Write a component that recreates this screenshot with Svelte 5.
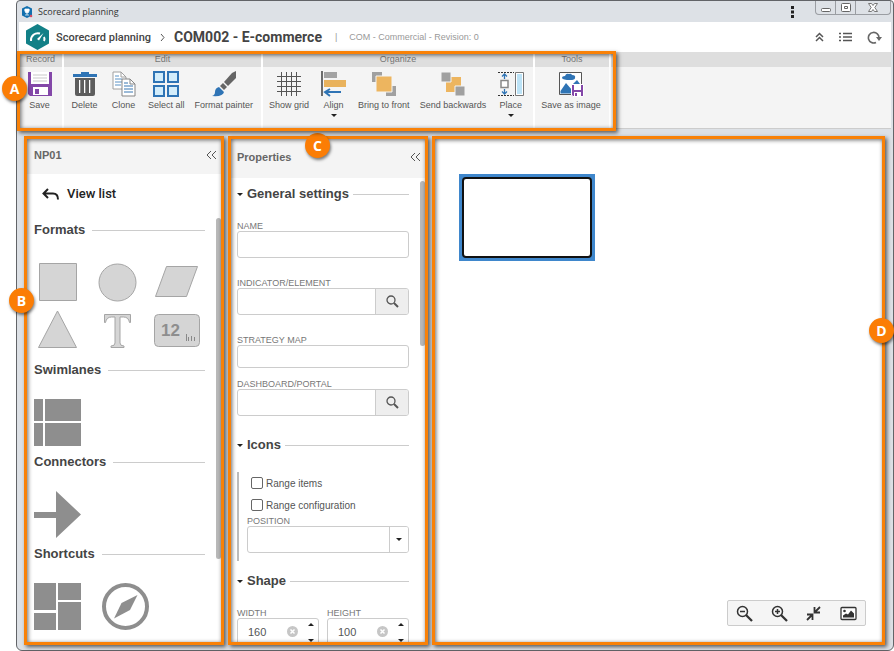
<script lang="ts">
  interface Action {
    id: string;
    label: string;
    menu?: boolean;
  }

  interface Group {
    title: string;
    actions: Action[];
  }

  const groups: Group[] = [
    { title: 'Record', actions: [{ id: 'save', label: 'Save' }] },
    {
      title: 'Edit',
      actions: [
        { id: 'delete', label: 'Delete' },
        { id: 'clone', label: 'Clone' },
        { id: 'select', label: 'Select all' },
        { id: 'painter', label: 'Format painter' },
      ],
    },
    {
      title: 'Organize',
      actions: [
        { id: 'grid', label: 'Show grid' },
        { id: 'align', label: 'Align', menu: true },
        { id: 'front', label: 'Bring to front' },
        { id: 'back', label: 'Send backwards' },
        { id: 'place', label: 'Place', menu: true },
      ],
    },
    { title: 'Tools', actions: [{ id: 'image', label: 'Save as image' }] },
  ];

  const palette = [
    { title: 'Formats', wide: false, items: ['square', 'circle', 'parallelogram', 'triangle', 'text', 'indicator'] },
    { title: 'Swimlanes', wide: true, items: ['swimlane'] },
    { title: 'Connectors', wide: true, items: ['arrow'] },
    { title: 'Shortcuts', wide: true, items: ['portal', 'compass'] },
  ];

  let name = $state('');
  let indicator = $state('');
  let strategyMap = $state('');
  let dashboard = $state('');
  let rangeItems = $state(false);
  let rangeConfig = $state(false);
  let position = $state('');
  let size = $state<Record<string, number | null>>({ width: 160, height: 100 });

  function step(key: string, delta: number) {
    size[key] = (size[key] ?? 0) + delta;
  }
</script>

{#snippet actionIcon(id: string)}
  <svg class="action-icon" width="26" height="26" viewBox="0 0 26 26" aria-hidden="true">
    {#if id === 'save'}
      <path d="M1 1h24v24H3l-2-2z" fill="#8347a8" />
      <path d="M4 1h18v12H4z" fill="#fff" />
      <path d="M6 4h14M6 7h14M6 10h14" stroke="#c9c9c9" />
      <path d="M6 16h15v8H6z" fill="#fff" />
      <path d="M8 18h4v5H8z" fill="#8347a8" />
    {:else if id === 'delete'}
      <path d="M9 1h8v2h8v3H1V3h8z" fill="#2f74b5" />
      <path d="M3 7h20v16q0 2-2 2H5q-2 0-2-2z" fill="#5d5d5d" />
      <path d="M8 9v13M13 9v13M18 9v13" stroke="#fff" stroke-width="2" />
      <path d="M8.500 9v13M13.500 9v13M18.500 9v13" stroke="#8b8b8b" />
    {:else if id === 'clone'}
      <path d="M2 1h8l5 5v12H2z" fill="#fff" stroke="#a0a0a0" />
      <path d="M10 1v5h5" fill="none" stroke="#a0a0a0" />
      <path d="M4 5h4M4 8h7M4 11h7M4 14h6" stroke="#5a92c5" />
      <path d="M11 8h8l5 5v12H11z" fill="#fff" stroke="#858585" />
      <path d="M19 8v5h5" fill="none" stroke="#858585" />
      <path d="M13 12h4M13 15h9M13 18h9M13 21h9" stroke="#3977b1" />
    {:else if id === 'select'}
      <g fill="#d3edfb" stroke="#2f74b5" stroke-width="2">
        <path d="M1 1h10v10H1zM15 1h10v10H15zM1 15h10v10H1zM15 15h10v10H15z" />
      </g>
    {:else if id === 'painter'}
      <path d="M25 0v7l-8 8-4-4 8-9z" fill="#656565" />
      <path d="M12 12l4 4-3 3-4-4z" fill="#656565" />
      <path d="M8 16l5 5q-1 5-12 4 3-1 3-4 0-4 4-5z" fill="#2f74b5" />
    {:else if id === 'grid'}
      <path
        d="M5.500 1v24M10.500 1v24M15.500 1v24M20.500 1v24M1 5.500h24M1 10.500h24M1 15.500h24M1 20.500h24"
        fill="none"
        stroke="#555"
      />
    {:else if id === 'align'}
      <path d="M1 0v25" stroke="#222" stroke-width="1.300" />
      <path d="M3 1h13v6H3z" fill="#a3a3a3" />
      <path d="M3 9h22v7H3z" fill="#e9b25c" />
      <path d="M20 21H4m5-3-5 3 5 4" fill="none" stroke="#2f74b5" stroke-width="2" />
    {:else if id === 'front'}
      <path d="M1 1h10v10H1zM15 15h10v10H15z" fill="#a0a0a0" />
      <path d="M5 5h16v16H5z" fill="#edb55f" stroke="#f4f4f4" />
    {:else if id === 'back'}
      <path d="M6 6h15v15H6z" fill="#edb55f" />
      <path d="M1 1h10v10H1zM15 15h10v10H15z" fill="#a0a0a0" stroke="#f4f4f4" />
    {:else if id === 'place'}
      <path d="M0 1.500h16M0 24.500h16" stroke="#333" stroke-dasharray="2 1" />
      <path d="M17.500 1.500h8v23h-8z" fill="#fff" stroke="#777" />
      <path d="M19 3h5v20h-5z" fill="#bce3f7" />
      <path d="M3 9.500h7v7H3z" fill="#fff" stroke="#888" stroke-width="1.500" />
      <path d="M6.500 8V3M4 5.500L6.500 3 9 5.500M6.500 18v5M4 20.500L6.500 23 9 20.500" fill="none" stroke="#2f74b5" stroke-width="1.300" />
    {:else}
      <path d="M1.500 1.500h22v22h-22z" fill="#fff" stroke="#555" />
      <path d="M4 7q0-2 3-2 1-3 4-2 2-1 3 1 4 0 3 3 0 2-5 2-7 0-8-2z" fill="#2f74b5" />
      <path d="M2.500 22.500V20L8 12l6 7v3.500zM15 13l4-4 3 4z" fill="#2f74b5" />
      <path d="M13.500 13.500h12v12H15l-1.500-1.500z" fill="#8347a8" stroke="#fff" />
      <path d="M16 14h7v5h-7zM16 21h7v4h-7z" fill="#fff" />
      <path d="M17 22h2v3h-2z" fill="#8347a8" />
    {/if}
  </svg>
{/snippet}

{#snippet shape(id: string)}
  <svg width="47" height="47" viewBox="0 0 47 47" aria-hidden="true">
    <g fill="#d5d5d5" stroke="#a5a5a5">
      {#if id === 'square'}
        <path d="M5.500 4.500h37v37h-37z" />
      {:else if id === 'circle'}
        <circle cx="23.500" cy="23.500" r="18.500" />
      {:else if id === 'parallelogram'}
        <path d="M12.500 7.500h31l-11 30h-31z" />
      {:else if id === 'triangle'}
        <path d="M23.500 4l19 36.500h-38z" />
      {:else if id === 'text'}
        <path
          d="M10.500 7.500h26v8h-1q-1-5.500-6-5.500h-3.500v26q0 3 4 3v1.500h-13v-1.500q4 0 4-3v-26H17.500q-5 0-6 5.500h-1z"
        />
      {:else if id === 'indicator'}
        <rect x="0.500" y="7.500" width="45" height="32" rx="4" />
        <path d="M32.500 27v7M34.500 30v4M37.500 29v5M40.500 30v4" stroke="#888" />
        <text x="7" y="29">12</text>
      {/if}
    </g>
    <g fill="#8e8e8e">
      {#if id === 'swimlane'}
        <path d="M0 0h9v22H0zM11 0h36v22H11zM0 24h9v23H0zM11 24h36v23H11z" />
      {:else if id === 'arrow'}
        <path d="M0 21h22V0l25 23.500L22 47V27H0z" />
      {:else if id === 'portal'}
        <path d="M0 0h22v27H0zM24 0h23v17H24zM0 30h22v17H0zM24 19h23v28H24z" />
      {:else if id === 'compass'}
        <circle cx="23.500" cy="23.500" r="21.500" fill="none" stroke="#8e8e8e" stroke-width="4" />
        <path d="M35.500 12L28 27l-16 8.500L19.500 20z" />
      {/if}
    </g>
  </svg>
{/snippet}

{#snippet collapseIcon()}
  <svg width="11" height="10" viewBox="0 0 11 10" fill="none" stroke="#555" aria-hidden="true">
    <path d="M5 1L1 5l4 4M10 1L6 5l4 4" />
  </svg>
{/snippet}

{#snippet searchIcon()}
  <svg width="13" height="13" viewBox="0 0 13 13" fill="none" stroke="#555" aria-hidden="true">
    <circle cx="5" cy="5" r="4" stroke-width="1.300" />
    <path d="M8 8l4 4" stroke-width="2" />
  </svg>
{/snippet}

{#snippet callout(letter: string)}
  <div class="callout">
    <span class="badge badge-{letter.toLowerCase()}">{letter}</span>
  </div>
{/snippet}

{#snippet sizeField(key: string)}
  <div class="field">
    <label for={key}>{key}</label>
    <div class="control">
      <input id={key} type="number" bind:value={size[key]} />
      <button class="clear" aria-label="Clear {key}" onclick={() => (size[key] = null)}>
        <svg width="11" height="11" viewBox="0 0 11 11">
          <circle cx="5.500" cy="5.500" r="5.500" fill="#c6c6c6" />
          <path d="M3.500 3.500l4 4m0-4l-4 4" stroke="#fff" stroke-width="1.500" />
        </svg>
      </button>
      <span class="stepper">
        <button aria-label="Increase {key}" onclick={() => step(key, 1)}><i class="caret up"></i></button>
        <button aria-label="Decrease {key}" onclick={() => step(key, -1)}><i class="caret"></i></button>
      </span>
    </div>
  </div>
{/snippet}

<div class="window">
  <div class="titlebar">
    <svg width="12" height="12" viewBox="0 0 12 12" aria-hidden="true">
      <path d="M6 0l5 2.500v7L6 12 1 9.500v-7z" fill="#126fae" />
      <path d="M4 3h4v2q0 2-2 2T4 5zM3 4h6M6 7v2M4 9h4" fill="#fff" stroke="#fff" stroke-width=".7" />
      <circle cx="10" cy="10" r="1.300" fill="#d44c65" />
    </svg>
    <span>Scorecard planning</span>
    <button class="more" aria-label="More options">
      <svg width="3" height="12" viewBox="0 0 3 12" fill="#222">
        <path d="M0 0h3v3H0zM0 4.500h3v3H0zM0 9h3v3H0z" />
      </svg>
    </button>
    <div class="window-controls">
      <button class="minimize" aria-label="Minimize">
        <svg width="10" height="4" viewBox="0 0 10 4">
          <rect x=".5" y=".5" width="9" height="3" rx="1" fill="#fff" stroke="#666" />
        </svg>
      </button>
      <button aria-label="Maximize">
        <svg width="10" height="9" viewBox="0 0 10 9">
          <rect x=".5" y=".5" width="9" height="8" rx="1" fill="#fff" stroke="#666" />
          <path d="M3.500 3.500h3v2h-3z" fill="none" stroke="#666" />
        </svg>
      </button>
      <button class="close" aria-label="Close">
        <svg width="10" height="9" viewBox="0 0 10 9">
          <path d="M.5.500h3L5 2.500 6.500.500h3l-2.700 4 2.700 4h-3L5 6.500 3.500 8.500h-3l2.700-4z" fill="#fff" stroke="#777" />
        </svg>
      </button>
    </div>
  </div>

  <header>
    <svg width="25" height="28" viewBox="0 0 25 28" aria-hidden="true">
      <path d="M12.500 1L24 7.500v13L12.500 27 1 20.500v-13z" fill="#128087" />
      <path d="M6 18a7 7 0 0 1 9-7.500M19 14q1 2 0 4" fill="none" stroke="#fff" stroke-width="2" />
      <path d="M18.500 10L14 17.500l-2-1.500z" fill="#fff" />
    </svg>
    <a href="#planning">Scorecard planning</a>
    <svg width="5" height="9" viewBox="0 0 5 9" fill="none" stroke="#555" aria-hidden="true">
      <path d="M1 1l3 3.500L1 8" />
    </svg>
    <h1>COM002 - E-commerce</h1>
    <span class="revision"><span>|</span><span>COM - Commercial - Revision: 0</span></span>
    <div class="header-tools">
      <button aria-label="Collapse toolbar">
        <svg width="9" height="10" viewBox="0 0 9 10" fill="none" stroke="#555" stroke-width="1.500">
          <path d="M1 5l3.500-3.500L8 5M1 9l3.500-3.500L8 9" />
        </svg>
      </button>
      <button aria-label="List">
        <svg width="13" height="10" viewBox="0 0 13 10" stroke="#555" stroke-width="1.500">
          <path d="M0 1.500h2M4 1.500h9M0 5h2M4 5h9M0 8.500h2M4 8.500h9" />
        </svg>
      </button>
      <button aria-label="Refresh">
        <svg width="15" height="13" viewBox="0 0 15 13">
          <path d="M9 11.500A5.300 5.300 0 1 1 12 7" fill="none" stroke="#666" stroke-width="1.600" />
          <path d="M9 6h6l-3 4z" fill="#666" />
        </svg>
      </button>
    </div>
  </header>

  <div class="ribbon">
    <div class="groups">
      {#each groups as group}
        <section class="group">
          <h2>{group.title}</h2>
          <div class="actions">
            {#each group.actions as action (action.id)}
              <button>
                {@render actionIcon(action.id)}
                <span>{action.label}</span>
                {#if action.menu}<i class="caret"></i>{/if}
              </button>
            {/each}
          </div>
        </section>
      {/each}
      {@render callout('A')}
    </div>
    <div class="ribbon-rest"></div>
  </div>

  <main>
    <aside class="panel shapes">
      <div class="panel-head">
        <h2>NP01</h2>
        <button aria-label="Collapse NP01">{@render collapseIcon()}</button>
      </div>
      <div class="panel-body">
        <button class="view-list">
          <svg width="17" height="13" viewBox="0 0 17 13" fill="none" stroke="#222" stroke-width="2">
            <path d="M6 1L1.500 5.500 6 10M2 5.500h9q5 0 5 6" />
          </svg>
          View list
        </button>
        {#each palette as section}
          <section>
            <h3>{section.title}</h3>
            <div class="shape-grid" class:wide={section.wide}>
              {#each section.items as item}
                <button aria-label={item}>{@render shape(item)}</button>
              {/each}
            </div>
          </section>
        {/each}
      </div>
      <div class="thumb"></div>
      {@render callout('B')}
    </aside>

    <aside class="panel properties">
      <div class="panel-head">
        <h2>Properties</h2>
        <button aria-label="Collapse properties">{@render collapseIcon()}</button>
      </div>
      <div class="panel-body">
        <h3><i class="caret"></i>General settings</h3>
        <div class="fields">
          <div class="field">
            <label for="name">Name</label>
            <div class="control"><input id="name" type="text" bind:value={name} /></div>
          </div>
          <div class="field">
            <label for="indicator">Indicator/Element</label>
            <div class="control">
              <input id="indicator" type="text" bind:value={indicator} />
              <button class="search" aria-label="Search indicator">{@render searchIcon()}</button>
            </div>
          </div>
          <div class="field">
            <label for="strategy">Strategy map</label>
            <div class="control short"><input id="strategy" type="text" bind:value={strategyMap} /></div>
          </div>
          <div class="field near">
            <label for="dashboard">Dashboard/Portal</label>
            <div class="control">
              <input id="dashboard" type="text" bind:value={dashboard} />
              <button class="search" aria-label="Search dashboard">{@render searchIcon()}</button>
            </div>
          </div>
        </div>

        <h3><i class="caret"></i>Icons</h3>
        <div class="icon-settings">
          <label class="check"><input type="checkbox" bind:checked={rangeItems} />Range items</label>
          <label class="check"><input type="checkbox" bind:checked={rangeConfig} />Range configuration</label>
          <div class="field">
            <label for="position">Position</label>
            <div class="control">
              <select id="position" bind:value={position}><option value=""></option></select>
              <span class="drop"><i class="caret"></i></span>
            </div>
          </div>
        </div>

        <h3><i class="caret"></i>Shape</h3>
        <div class="size-row">
          {@render sizeField('width')}
          {@render sizeField('height')}
        </div>
      </div>
      <div class="thumb"></div>
      {@render callout('C')}
    </aside>

    <section class="panel canvas">
      <div class="node"></div>
      <div class="zoom-tools">
        <button aria-label="Zoom out">
          <svg width="17" height="17" viewBox="0 0 17 17" fill="none" stroke="#333">
            <circle cx="6.500" cy="6.500" r="5" stroke-width="1.500" />
            <path d="M4 6.500h5" stroke-width="1.500" />
            <path d="M10 10l6 6" stroke-width="2.300" />
          </svg>
        </button>
        <button aria-label="Zoom in">
          <svg width="17" height="17" viewBox="0 0 17 17" fill="none" stroke="#333">
            <circle cx="6.500" cy="6.500" r="5" stroke-width="1.500" />
            <path d="M4 6.500h5M6.500 4v5" stroke-width="1.500" />
            <path d="M10 10l6 6" stroke-width="2.300" />
          </svg>
        </button>
        <button aria-label="Fit">
          <svg width="17" height="17" viewBox="0 0 17 17" fill="none" stroke="#333" stroke-width="1.800">
            <path d="M15 2l-5 5M9.500 2v5.500H15M2 15l5-5M2 9.500h5.500V15" />
          </svg>
        </button>
        <button aria-label="Background image">
          <svg width="17" height="17" viewBox="0 0 17 17">
            <rect x="1" y="2.500" width="15" height="12" rx="1" fill="#fff" stroke="#333" stroke-width="1.300" />
            <circle cx="4.500" cy="6" r="1.300" fill="#333" />
            <path d="M3 12.500v-2l3-2 2 1 3-4 3 3v4z" fill="#333" />
          </svg>
        </button>
      </div>
      {@render callout('D')}
    </section>
  </main>
</div>

<style>
  :global(body) {
    margin: 0;
    background: #fff;
  }

  .window {
    box-sizing: border-box;
    display: flex;
    flex-direction: column;
    height: 100vh;
    margin-left: 16px;
    padding: 0 2px 3px;
    border: 1px solid #626468;
    border-radius: 4px 4px 6px 6px;
    background: #dde1e6;
    font-family: 'Liberation Sans', Arial, sans-serif;
    font-size: 9px;
    color: #555;
  }

  button {
    margin: 0;
    padding: 0;
    border: 0;
    background: none;
    font: inherit;
    color: inherit;
    cursor: pointer;
  }

  svg {
    display: block;
    flex-shrink: 0;
  }

  h1,
  h2,
  h3 {
    margin: 0;
  }

  .caret {
    width: 0;
    height: 0;
    border: 3px solid transparent;
    border-top-color: #222;
    border-bottom-width: 0;
  }

  .caret.up {
    border-top-width: 0;
    border-bottom: 3px solid #222;
  }

  .titlebar {
    display: flex;
    align-items: center;
    height: 21px;
    padding-left: 2px;
    gap: 5px;
    font-family: 'Open Sans', sans-serif;
    color: #333;
  }

  .more {
    margin-left: auto;
    margin-right: 16px;
  }

  .window-controls {
    display: flex;
    align-self: flex-start;
    height: 13px;
    border: 1px solid #9a9da2;
    border-top: 0;
    border-radius: 0 0 4px 4px;
  }

  .window-controls button {
    display: flex;
    align-items: center;
    justify-content: center;
    width: 20px;
    border-right: 1px solid #9a9da2;
    box-sizing: border-box;
  }

  .window-controls .minimize {
    align-items: flex-end;
    padding-bottom: 2px;
  }

  .window-controls .close {
    width: 34px;
    border-right: 0;
  }

  header {
    display: flex;
    align-items: center;
    height: 30px;
    padding: 0 9px 0 6px;
    background: #fff;
  }

  header a {
    margin: 0 9px 0 6px;
    font-family: Roboto, sans-serif;
    font-size: 11px;
    font-weight: 500;
    color: #444;
    text-decoration: none;
  }

  h1 {
    margin-left: 9px;
    font-family: Roboto, sans-serif;
    font-size: 14px;
    color: #444;
  }

  .revision {
    display: flex;
    gap: 12px;
    margin-left: 13px;
    color: #999;
  }

  .header-tools {
    display: flex;
    gap: 15px;
    align-items: center;
    margin-left: auto;
  }

  .ribbon {
    display: flex;
    flex-shrink: 0;
    height: 76px;
    border-bottom: 1px solid #ccc;
    background: #fff;
  }

  .groups {
    position: relative;
    z-index: 2;
    display: flex;
    gap: 2px;
  }

  .group {
    display: flex;
    flex-direction: column;
    background: #f4f4f4;
  }

  .group h2 {
    background: #dedede;
    font-size: 9px;
    font-weight: 400;
    line-height: 15px;
    text-align: center;
    color: #777;
  }

  .actions {
    display: flex;
    padding: 0 3px 0 1px;
  }

  .actions button {
    display: flex;
    flex-direction: column;
    align-items: center;
    min-width: 39px;
    padding: 4px 5px 0;
  }

  .actions span {
    margin-top: 2px;
    line-height: 12px;
    white-space: nowrap;
  }

  .actions .caret {
    margin-top: 3px;
  }

  .ribbon-rest {
    flex: 1;
    margin-left: 2px;
    border-top: 15px solid #dedede;
    background: #f4f4f4;
  }

  main {
    display: grid;
    grid-template-columns: 200px 200px 1fr;
    gap: 4px;
    flex: 1;
    min-height: 0;
    padding: 7px 6px 2px 5px;
  }

  .panel {
    position: relative;
    display: flex;
    flex-direction: column;
    min-height: 0;
    background: #fff;
  }

  .callout {
    position: absolute;
    inset: 0;
    border: 3px solid #f98107;
    box-shadow:
      2px 2px 4px rgba(0, 0, 0, 0.6),
      inset 1px 1px 4px rgba(0, 0, 0, 0.6);
    pointer-events: none;
  }

  .groups .callout {
    inset: -1px -7px -3px -2px;
  }

  .badge {
    position: absolute;
    width: 25px;
    border-radius: 50%;
    background: #fb7d05;
    box-shadow: 1px 2px 3px rgba(0, 0, 0, 0.5);
    font: bold 14px/25px 'Open Sans', sans-serif;
    text-align: center;
    color: #fff;
  }

  .badge-a {
    top: 22px;
    left: -18px;
  }

  .badge-b {
    top: 149px;
    left: -18px;
  }

  .badge-c {
    top: -6px;
    left: 74px;
  }

  .badge-d {
    top: 179px;
    right: -12px;
  }

  .panel-head {
    display: flex;
    align-items: center;
    justify-content: space-between;
    flex-shrink: 0;
    height: 38px;
    padding: 0 7px 0 10px;
    background: #f4f4f4;
  }

  .panel-head h2 {
    font-size: 11px;
    color: #666;
  }

  .properties .panel-head {
    height: 42px;
    padding-left: 9px;
  }

  .panel-body {
    flex: 1;
    min-height: 0;
    padding: 12px 19px 0 10px;
    overflow: hidden;
  }

  .properties .panel-body {
    padding: 7px 19px 0 9px;
  }

  .thumb {
    position: absolute;
    top: 82px;
    right: 3px;
    width: 5px;
    height: 341px;
    border-radius: 3px;
    background: #b9b9b9;
  }

  .properties .thumb {
    top: 45px;
    height: 165px;
  }

  h3 {
    display: flex;
    align-items: center;
    gap: 7px;
    font-size: 13px;
    line-height: 18px;
    font-weight: 700;
    color: #444;
  }

  h3::after {
    content: '';
    flex: 1;
    height: 1px;
    background: #ccc;
  }

  .properties h3 {
    gap: 4px;
  }

  .view-list {
    display: flex;
    align-items: center;
    gap: 8px;
    padding-left: 8px;
    margin-bottom: 19px;
    font-family: Roboto, sans-serif;
    font-size: 13px;
    font-weight: 500;
    line-height: 16px;
    color: #222;
  }

  .shape-grid {
    display: grid;
    grid-template-columns: repeat(3, 47px);
    gap: 1px 13px;
    padding: 20px 0 7px;
  }

  .shape-grid.wide {
    grid-template-columns: repeat(2, 47px);
    gap: 21px;
  }

  .shape-grid text {
    fill: #8e8e8e;
    stroke: none;
    font: bold 17px 'Liberation Sans', sans-serif;
  }

  .fields {
    padding: 18px 0 20px;
  }

  .field + .field {
    margin-top: 20px;
  }

  .field + .near {
    margin-top: 11px;
  }

  .field label {
    display: block;
    line-height: 10px;
    text-transform: uppercase;
    color: #777;
  }

  .control {
    display: flex;
    box-sizing: border-box;
    height: 27px;
    border: 1px solid #ccc;
    border-radius: 3px;
    background: #fff;
    overflow: hidden;
  }

  .control.short {
    height: 23px;
  }

  .control input,
  .control select {
    flex: 1;
    min-width: 0;
    padding: 0 0 0 10px;
    border: 0;
    outline: 0;
    background: none;
    appearance: none;
    font: 11px 'Liberation Sans', sans-serif;
    color: #555;
  }

  .control input[type='number'] {
    appearance: textfield;
  }

  .control input::-webkit-inner-spin-button {
    display: none;
  }

  .search,
  .drop {
    display: flex;
    align-items: center;
    justify-content: center;
    width: 33px;
    border-left: 1px solid #ccc;
    background: #eee;
  }

  .drop {
    width: 18px;
    background: #fff;
    pointer-events: none;
  }

  .icon-settings {
    margin: 18px 0 11px;
    padding: 0 0 8px 8px;
    border-left: 2px solid #bbb;
  }

  .check {
    display: flex;
    align-items: center;
    gap: 3px;
    height: 22px;
    padding-left: 4px;
    font-size: 10px;
  }

  .check input {
    width: 12px;
    height: 12px;
    margin: 0;
    border: 1px solid #666;
    border-radius: 2px;
    appearance: none;
  }

  .check input:checked {
    background: #2f74b5;
  }

  .size-row {
    display: grid;
    grid-template-columns: repeat(2, minmax(0, 1fr));
    gap: 8px;
    padding-top: 18px;
  }

  .size-row .field {
    margin: 0;
  }

  .clear {
    margin-right: 6px;
  }

  .stepper {
    display: flex;
    flex-direction: column;
    justify-content: space-between;
    padding: 4px 4px 2px;
  }

  .stepper button {
    display: flex;
  }

  .node {
    position: absolute;
    top: 38px;
    left: 27px;
    box-sizing: border-box;
    width: 136px;
    height: 87px;
    padding: 3px;
    background: #3f87cc;
  }

  .node::before {
    content: '';
    display: block;
    box-sizing: border-box;
    height: 100%;
    border: 2px solid #111;
    border-radius: 4px;
    background: #fff;
  }

  .zoom-tools {
    display: flex;
    align-items: center;
    justify-content: space-between;
    align-self: flex-end;
    box-sizing: border-box;
    width: 139px;
    height: 26px;
    margin: auto 19px 19px 0;
    padding: 0 8px;
    border: 1px solid #ccc;
    border-radius: 2px;
    background: #f5f5f5;
  }
</style>
